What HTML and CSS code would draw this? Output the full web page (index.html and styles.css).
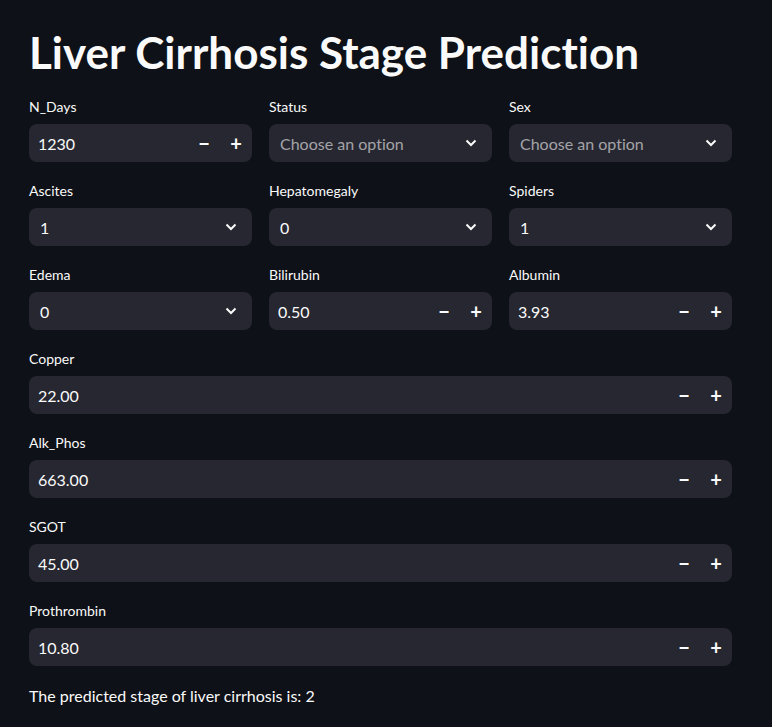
FILE: index.html
```html
<!DOCTYPE html>
<html>
<head>
<meta charset="utf-8">
<link rel="stylesheet" href="styles.css">
</head>
<body>
<main class="app">
  <h1 class="title">Liver Cirrhosis Stage Prediction</h1>

  <div class="grid3">
    <div class="field">
      <label class="lbl">N_Days</label>
      <div class="box num"><span class="val">1230</span><span class="steps"><span class="step">&minus;</span><span class="step">+</span></span></div>
    </div>
    <div class="field">
      <label class="lbl">Status</label>
      <div class="box sel"><span class="val ph">Choose an option</span><svg class="chev" viewBox="0 0 12 8"><path d="M1.5 1.5 L6 6 L10.5 1.5" /></svg></div>
    </div>
    <div class="field">
      <label class="lbl">Sex</label>
      <div class="box sel"><span class="val ph">Choose an option</span><svg class="chev" viewBox="0 0 12 8"><path d="M1.5 1.5 L6 6 L10.5 1.5" /></svg></div>
    </div>

    <div class="field">
      <label class="lbl">Ascites</label>
      <div class="box sel"><span class="val">1</span><svg class="chev" viewBox="0 0 12 8"><path d="M1.5 1.5 L6 6 L10.5 1.5" /></svg></div>
    </div>
    <div class="field">
      <label class="lbl">Hepatomegaly</label>
      <div class="box sel"><span class="val">0</span><svg class="chev" viewBox="0 0 12 8"><path d="M1.5 1.5 L6 6 L10.5 1.5" /></svg></div>
    </div>
    <div class="field">
      <label class="lbl">Spiders</label>
      <div class="box sel"><span class="val">1</span><svg class="chev" viewBox="0 0 12 8"><path d="M1.5 1.5 L6 6 L10.5 1.5" /></svg></div>
    </div>

    <div class="field">
      <label class="lbl">Edema</label>
      <div class="box sel"><span class="val">0</span><svg class="chev" viewBox="0 0 12 8"><path d="M1.5 1.5 L6 6 L10.5 1.5" /></svg></div>
    </div>
    <div class="field">
      <label class="lbl">Bilirubin</label>
      <div class="box num"><span class="val">0.50</span><span class="steps"><span class="step">&minus;</span><span class="step">+</span></span></div>
    </div>
    <div class="field">
      <label class="lbl">Albumin</label>
      <div class="box num"><span class="val">3.93</span><span class="steps"><span class="step">&minus;</span><span class="step">+</span></span></div>
    </div>
  </div>

  <div class="field">
    <label class="lbl">Copper</label>
    <div class="box num"><span class="val">22.00</span><span class="steps"><span class="step">&minus;</span><span class="step">+</span></span></div>
  </div>
  <div class="field">
    <label class="lbl">Alk_Phos</label>
    <div class="box num"><span class="val">663.00</span><span class="steps"><span class="step">&minus;</span><span class="step">+</span></span></div>
  </div>
  <div class="field">
    <label class="lbl">SGOT</label>
    <div class="box num"><span class="val">45.00</span><span class="steps"><span class="step">&minus;</span><span class="step">+</span></span></div>
  </div>
  <div class="field">
    <label class="lbl">Prothrombin</label>
    <div class="box num"><span class="val">10.80</span><span class="steps"><span class="step">&minus;</span><span class="step">+</span></span></div>
  </div>

  <p class="result">The predicted stage of liver cirrhosis is: 2</p>
</main>
</body>
</html>
```

FILE: styles.css
```css
html, body {
  margin: 0;
  padding: 0;
  background: #0e1117;
  color: #fafafa;
  font-family: "Lato", "Open Sans", sans-serif;
  font-variant-ligatures: none;
}

.app {
  width: 703px;
  padding: 24px 0 0 29px;
  display: flex;
  flex-direction: column;
  gap: 16px;
}

.title {
  margin: 0;
  font-size: 44px;
  font-weight: 700;
  line-height: 56px;
  height: 54px;
}

.grid3 {
  display: grid;
  grid-template-columns: repeat(3, 1fr);
  column-gap: 17px;
  row-gap: 16px;
}

.field {
  display: flex;
  flex-direction: column;
}

.lbl {
  font-size: 14px;
  line-height: 26px;
  height: 24px;
  margin-bottom: 6px;
}

.box {
  height: 38px;
  background: #262730;
  border-radius: 8px;
  display: flex;
  align-items: center;
  font-size: 16px;
}

.box .val {
  flex: 1;
}

.num .val {
  padding-left: 9px;
}

.sel .val {
  padding-left: 11px;
}

.ph {
  color: rgba(250, 250, 250, 0.6);
}

.steps {
  display: flex;
}

.step {
  width: 32px;
  text-align: center;
  font-size: 20px;
  font-weight: 700;
}

.chev {
  width: 12px;
  height: 8px;
  margin-right: 15px;
  fill: none;
  stroke: #fafafa;
  stroke-width: 2;
}

.result {
  margin: 0;
  font-size: 16px;
  line-height: 24px;
  padding-top: 2px;
}
```
